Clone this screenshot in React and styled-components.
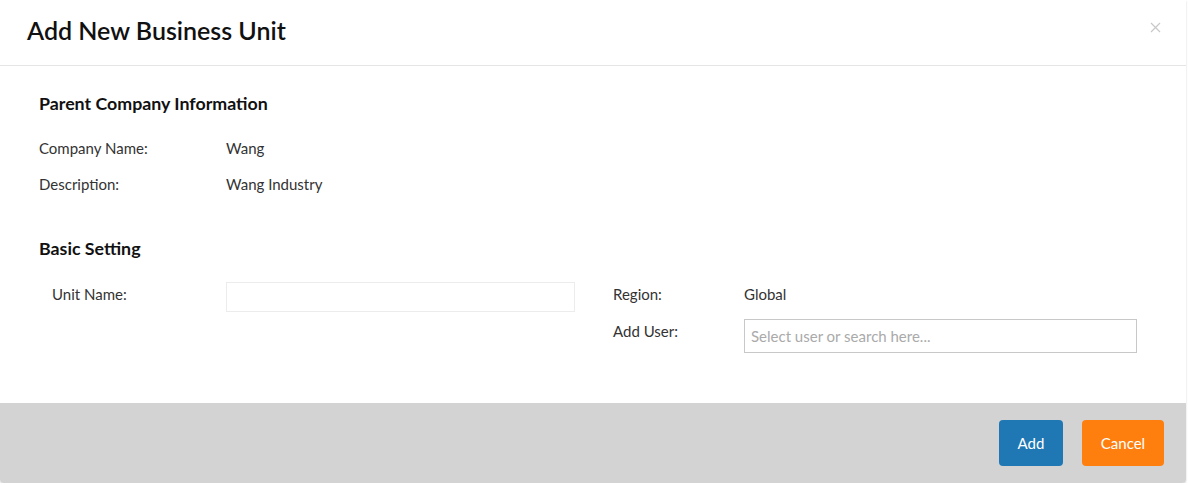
import styled, { createGlobalStyle } from 'styled-components';

const GlobalStyle = createGlobalStyle`
  html, body {
    margin: 0;
    padding: 0;
    background: #fff;
    font-family: Lato, "Open Sans", sans-serif;
    color: #333;
  }
`;

const Modal = styled.div`
  width: 1186px;
  background: #fff;
  border-radius: 0 0 4px 4px;
  box-shadow: 0 1px 2px rgba(0, 0, 0, 0.2);
`;

const Header = styled.header`
  display: flex;
  align-items: center;
  justify-content: space-between;
  height: 66px;
  padding: 0 27px;
  border-bottom: 1px solid #e5e5e5;
  box-sizing: border-box;
`;

const Title = styled.h1`
  margin: 0 0 5px;
  font-size: 25px;
  font-weight: 600;
  color: #111;
`;

const Close = styled.button`
  background: none;
  border: none;
  padding: 0;
  margin: 0 -2px 11px 0;
  color: #c8c8c8;
  cursor: pointer;
  display: flex;
`;

const Body = styled.main`
  padding: 25px 39px 50px;
`;

const SectionTitle = styled.h2`
  margin: 0;
  font-size: 17.8px;
  font-weight: 700;
  color: #111;
  line-height: 24px;
`;

const InfoList = styled.div`
  display: flex;
  flex-direction: column;
  gap: 12px;
  margin: 21px 0 40px;
`;

const InfoRow = styled.div`
  display: grid;
  grid-template-columns: 187px 1fr;
`;

const Settings = styled.div`
  display: grid;
  grid-template-columns: 574px 1fr;
  margin-top: 22px;
`;

const Column = styled.div`
  display: flex;
  flex-direction: column;
  gap: 13px;
`;

const FieldRow = styled.div`
  display: grid;
  grid-template-columns: ${(p) => p.$label}px ${(p) => p.$field}px;
  align-items: start;
  padding-left: ${(p) => p.$indent || 0}px;
`;

const Label = styled.span`
  font-size: 15px;
  line-height: 24px;
  color: #333;
`;

const Value = styled.span`
  font-size: 15px;
  line-height: 24px;
  color: #333;
`;

const TextInput = styled.input`
  box-sizing: border-box;
  width: 100%;
  height: ${(p) => p.$height}px;
  border: 1px solid ${(p) => p.$border};
  border-radius: 0;
  padding: 0 6px;
  font-family: Lato, sans-serif;
  font-size: 15px;
  color: #333;
  outline: none;

  &::placeholder {
    color: #aaa;
  }
`;

const Footer = styled.footer`
  display: flex;
  justify-content: flex-end;
  align-items: center;
  gap: 19px;
  height: 80px;
  padding-right: 22px;
  box-sizing: border-box;
  background: #d3d3d3;
  border-radius: 0 0 4px 4px;
`;

const Button = styled.button`
  height: 46px;
  min-width: ${(p) => p.$width}px;
  border: none;
  border-radius: 4px;
  background: ${(p) => p.$bg};
  color: #fff;
  font-family: Lato, sans-serif;
  font-size: 15px;
  cursor: pointer;
`;

const App = () => {
  return (
    <>
      <GlobalStyle />
      <Modal>
        <Header>
          <Title>Add New Business Unit</Title>
          <Close aria-label="Close">
            <svg width="11" height="11" viewBox="0 0 11 11">
              <path d="M1 1L10 10M10 1L1 10" stroke="currentColor" strokeWidth="1.2" />
            </svg>
          </Close>
        </Header>
        <Body>
          <SectionTitle>Parent Company Information</SectionTitle>
          <InfoList>
            <InfoRow>
              <Label>Company Name:</Label>
              <Value>Wang</Value>
            </InfoRow>
            <InfoRow>
              <Label>Description:</Label>
              <Value>Wang Industry</Value>
            </InfoRow>
          </InfoList>
          <SectionTitle>Basic Setting</SectionTitle>
          <Settings>
            <Column>
              <FieldRow $label={174} $field={349} $indent={13}>
                <Label>Unit Name:</Label>
                <TextInput $height={30} $border="#ececec" />
              </FieldRow>
            </Column>
            <Column>
              <FieldRow $label={131} $field={393}>
                <Label>Region:</Label>
                <Value>Global</Value>
              </FieldRow>
              <FieldRow $label={131} $field={393}>
                <Label>Add User:</Label>
                <TextInput
                  $height={34}
                  $border="#c8c8c8"
                  placeholder="Select user or search here..."
                />
              </FieldRow>
            </Column>
          </Settings>
        </Body>
        <Footer>
          <Button $bg="#1f77b4" $width={64}>Add</Button>
          <Button $bg="#ff7f0e" $width={82}>Cancel</Button>
        </Footer>
      </Modal>
    </>
  );
};

export default App;
